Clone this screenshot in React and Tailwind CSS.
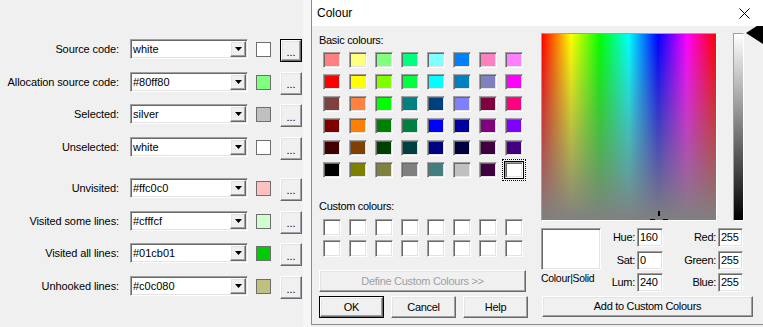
import React from 'react';

const groupA = [
  { label: 'Source code:', value: 'white', color: '#ffffff', focus: true },
  { label: 'Allocation source code:', value: '#80ff80', color: '#80ff80' },
  { label: 'Selected:', value: 'silver', color: '#c0c0c0' },
  { label: 'Unselected:', value: 'white', color: '#ffffff' },
];

const groupB = [
  { label: 'Unvisited:', value: '#ffc0c0', color: '#ffc0c0' },
  { label: 'Visited some lines:', value: '#cfffcf', color: '#cfffcf' },
  { label: 'Visited all lines:', value: '#01cb01', color: '#01cb01' },
  { label: 'Unhooked lines:', value: '#c0c080', color: '#c0c080' },
];

const basicColours = [
  '#ff8080', '#ffff80', '#80ff80', '#00ff80', '#80ffff', '#0080ff', '#ff80c0', '#ff80ff',
  '#ff0000', '#ffff00', '#80ff00', '#00ff40', '#00ffff', '#0080c0', '#8080c0', '#ff00ff',
  '#804040', '#ff8040', '#00ff00', '#008080', '#004080', '#8080ff', '#800040', '#ff0080',
  '#800000', '#ff8000', '#008000', '#008040', '#0000ff', '#0000a0', '#800080', '#8000ff',
  '#400000', '#804000', '#004000', '#004040', '#000080', '#000040', '#400040', '#400080',
  '#000000', '#808000', '#808040', '#808080', '#408080', '#c0c0c0', '#400040', '#ffffff',
];

const raised =
  'bg-[#f0f0f0] border border-t-white border-l-white border-r-[#696969] border-b-[#696969] shadow-[inset_-1px_-1px_0_#a0a0a0,inset_1px_1px_0_#e3e3e3]';
const sunken =
  'border border-t-[#a0a0a0] border-l-[#a0a0a0] border-r-white border-b-white shadow-[inset_1px_1px_0_#696969,inset_-1px_-1px_0_#e3e3e3]';

const Combo = ({ value }) => (
  <div className={`w-[118px] h-[20px] bg-white flex items-stretch ${sunken} p-[1px]`}>
    <div className="flex-1 pl-[1px] leading-[16px] text-[11px]">{value}</div>
    <div className={`w-[16px] flex items-center justify-center ${raised}`}>
      <svg width="7" height="4" viewBox="0 0 7 4">
        <polygon points="0,0 7,0 3.5,4" fill="#000" />
      </svg>
    </div>
  </div>
);

const DotsButton = ({ focus }) => (
  <div className={`w-[22px] h-[23px] ${focus ? 'border border-black' : ''}`}>
    <div className={`w-full h-full flex items-center justify-center text-[11px] leading-none pt-[3px] ${raised}`}>
      ...
    </div>
  </div>
);

const Row = ({ label, value, color, focus }) => (
  <div className="flex items-start h-[32.7px]">
    <div className="w-[119px] text-right text-[11px] leading-[20px] tracking-[-0.1px]">{label}</div>
    <div className="ml-[11px]">
      <Combo value={value} />
    </div>
    <div
      className="ml-[8px] mt-[3px] w-[15px] h-[15px] border border-[#6e6e6e]"
      style={{ backgroundColor: color }}
    />
    <div className="ml-[9px]">
      <DotsButton focus={focus} />
    </div>
  </div>
);

const Swatch = ({ color, selected }) => (
  <div className={selected ? 'outline outline-1 outline-dotted outline-black outline-offset-[2px]' : ''}>
    <div
      className={`w-[18px] h-[16px] ${sunken} ${selected ? 'ring-1 ring-black' : ''}`}
      style={{ backgroundColor: color }}
    />
  </div>
);

const Btn = ({ children, className = '', disabled, def }) => (
  <div className={`${className} ${def ? 'border border-black' : ''}`}>
    <div
      className={`w-full h-full flex items-center justify-center ${raised} ${
        disabled ? 'text-[#a0a0a0]' : 'text-black'
      }`}
    >
      {children}
    </div>
  </div>
);

const Field = ({ label, value, labelW }) => (
  <div className="flex items-center h-[19px]">
    <div className="text-right" style={{ width: labelW }}>
      {label}
    </div>
    <div className={`ml-[2px] h-[19px] bg-white ${sunken} pl-[2px] leading-[17px]`} style={{ width: labelW > 40 ? 25 : 26 }}>
      {value}
    </div>
  </div>
);

function ColourDialog() {
  return (
    <div className="w-[452px] h-[325px] border-l border-b border-[#8c8c8c] flex flex-col bg-[#f0f0f0] tracking-[-0.3px]">
      <div className="h-[26px] bg-white flex items-center justify-between pl-[5px] pr-[13px]">
        <span className="text-[12px] tracking-normal">Colour</span>
        <svg width="11" height="11" viewBox="0 0 11 11">
          <path d="M0.5 0.5 L10.5 10.5 M10.5 0.5 L0.5 10.5" stroke="#000" strokeWidth="1" />
        </svg>
      </div>
      <div className="flex-1 relative overflow-hidden flex text-[11px]">
        <div className="w-[229px] pl-[7px] flex flex-col">
          <div className="mt-[7px] h-[14px] leading-[14px]">Basic colours:</div>
          <div className="mt-[5px] ml-[4px] grid grid-cols-[repeat(8,18px)] gap-x-[8px] gap-y-[6px]">
            {basicColours.map((c, i) => (
              <Swatch key={i} color={c} selected={i === 47} />
            ))}
          </div>
          <div className="mt-[21px] h-[14px] leading-[14px]">Custom colours:</div>
          <div className="mt-[6px] ml-[4px] grid grid-cols-[repeat(8,18px)] gap-x-[8px] gap-y-[4px]">
            {[...Array(16)].map((_, i) => (
              <div key={i} className={`w-[18px] h-[17px] bg-white ${sunken}`} />
            ))}
          </div>
          <Btn className="mt-[13px] w-[207px] h-[22px]" disabled>
            Define Custom Colours &gt;&gt;
          </Btn>
          <div className="mt-[4px] flex gap-[7px]">
            <Btn className="w-[65px] h-[22px]" def>
              OK
            </Btn>
            <Btn className="w-[65px] h-[22px]">Cancel</Btn>
            <Btn className="w-[65px] h-[22px]">Help</Btn>
          </div>
        </div>
        <div className="flex-1 flex flex-col">
          <div className="mt-[7px] flex">
            <div
              className={`relative overflow-hidden w-[176px] h-[188px] border border-t-[#a0a0a0] border-l-[#a0a0a0] border-r-white border-b-white bg-[linear-gradient(to_bottom,rgba(128,128,128,0),#808080),linear-gradient(to_right,#ff0000,#ffff00,#00ff00,#00ffff,#0000ff,#ff00ff,#ff0000)]`}
            >
              <svg className="absolute left-[107px] top-[176px]" width="20" height="14" viewBox="0 0 20 14">
                <rect x="9" y="1" width="2" height="5" fill="#000" />
                <rect x="1" y="9" width="5" height="3" fill="#000" />
                <rect x="14" y="9" width="5" height="3" fill="#000" />
              </svg>
            </div>
            <div className="ml-[16px] w-[11px] h-[188px] border border-t-[#a0a0a0] border-l-[#a0a0a0] border-r-white border-b-white bg-[linear-gradient(to_bottom,#ffffff,#000000)]" />
          </div>
          <div className="mt-[7px] flex">
            <div className="w-[60px] flex flex-col">
              <div className={`w-[60px] h-[42px] bg-white ${sunken}`} />
              <div className="mt-[1px] h-[14px] leading-[14px] text-[10.5px]">Colour|Solid</div>
            </div>
            <div className="flex flex-col gap-[3.5px]">
              <Field label="Hue:" value="160" labelW={34} />
              <Field label="Sat:" value="0" labelW={34} />
              <Field label="Lum:" value="240" labelW={34} />
            </div>
            <div className="flex flex-col gap-[3.5px]">
              <Field label="Red:" value="255" labelW={53} />
              <Field label="Green:" value="255" labelW={53} />
              <Field label="Blue:" value="255" labelW={53} />
            </div>
          </div>
          <Btn className="mt-[4px] ml-[1px] w-[211px] h-[21px]">Add to Custom Colours</Btn>
        </div>
        <svg className="absolute left-[434px] top-[-4px]" width="17" height="23" viewBox="0 0 17 23">
          <polygon points="0,11 17,0 17,22" fill="#000" />
        </svg>
      </div>
    </div>
  );
}

export default function App() {
  return (
    <div className="w-[763px] h-[327px] bg-[#f0f0f0] flex items-start overflow-hidden font-['Liberation_Sans',Arial,sans-serif] text-black">
      <div className="w-[303px] h-full pt-[39px] flex flex-col">
        {groupA.map((r) => (
          <Row key={r.label} {...r} />
        ))}
        <div className="h-[8.2px]" />
        {groupB.map((r) => (
          <Row key={r.label} {...r} />
        ))}
      </div>
      <div className="w-[8px] h-full bg-[#f6f6f6]" />
      <ColourDialog />
    </div>
  );
}
